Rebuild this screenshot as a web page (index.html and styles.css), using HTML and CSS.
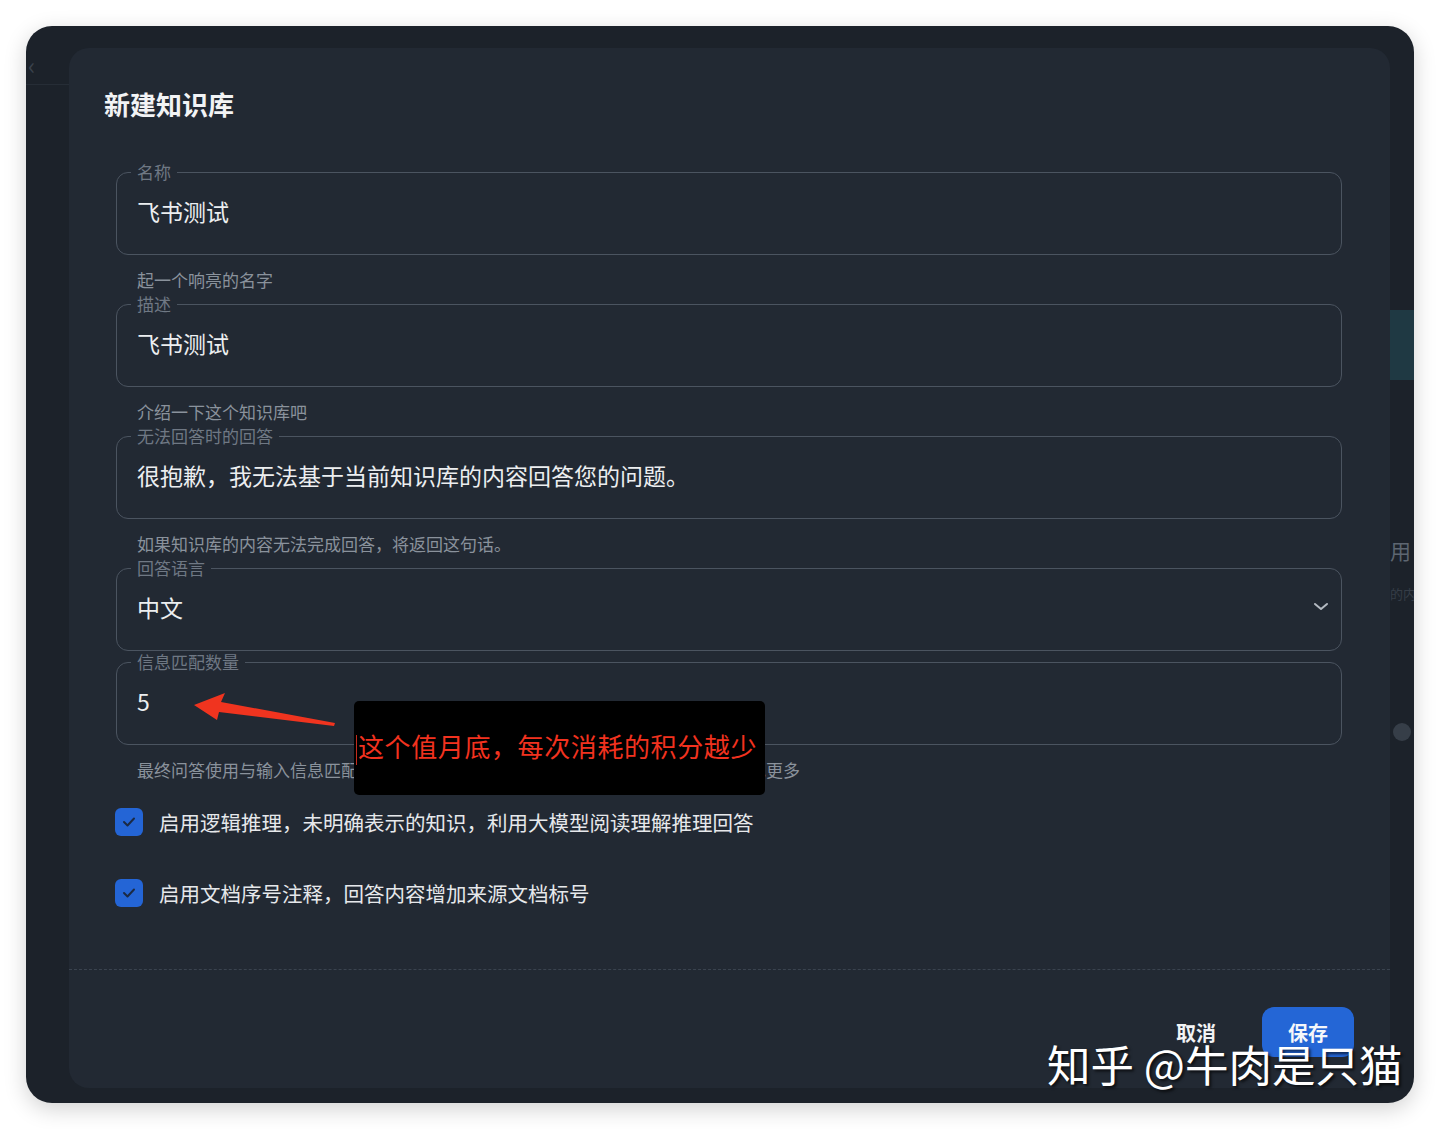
FILE: index.html
```html
<!DOCTYPE html>
<html lang="zh-CN">
<head>
  <meta charset="UTF-8">
  <meta name="viewport" content="width=device-width, initial-scale=1.0">
  <title>新建知识库</title>
  <link rel="stylesheet" href="styles.css">
</head>
<body>
  <div class="window">
    <div class="side side-left">
      <span class="back">&lsaquo;</span>
      <div class="side-line"></div>
    </div>

    <div class="dialog">
      <h2>新建知识库</h2>

      <div class="form">
        <fieldset class="field">
          <legend>名称</legend>
          <div class="value">飞书测试</div>
        </fieldset>
        <div class="help">起一个响亮的名字</div>

        <fieldset class="field">
          <legend>描述</legend>
          <div class="value">飞书测试</div>
        </fieldset>
        <div class="help">介绍一下这个知识库吧</div>

        <fieldset class="field">
          <legend>无法回答时的回答</legend>
          <div class="value">很抱歉，我无法基于当前知识库的内容回答您的问题。</div>
        </fieldset>
        <div class="help">如果知识库的内容无法完成回答，将返回这句话。</div>

        <fieldset class="field">
          <legend>回答语言</legend>
          <div class="value select">
            <span>中文</span>
            <svg class="chevron" width="16" height="10" viewBox="0 0 16 10">
              <path d="M2 2 L8 7 L14 2" fill="none" stroke="#b4bac2" stroke-width="2" stroke-linecap="round" stroke-linejoin="round"/>
            </svg>
          </div>
        </fieldset>

        <fieldset class="field">
          <legend>信息匹配数量</legend>
          <div class="value">5</div>
        </fieldset>
        <div class="help">最终问答使用与输入信息匹配度最高的几条知识，数值越大，参考越多，消耗积分也更多</div>

        <label class="check">
          <span class="box">
            <svg width="14" height="12" viewBox="0 0 14 12"><path d="M2 6 L5.5 9.5 L12 2.5" fill="none" stroke="#1b2a44" stroke-width="2" stroke-linecap="round" stroke-linejoin="round"/></svg>
          </span>
          启用逻辑推理，未明确表示的知识，利用大模型阅读理解推理回答
        </label>
        <label class="check">
          <span class="box">
            <svg width="14" height="12" viewBox="0 0 14 12"><path d="M2 6 L5.5 9.5 L12 2.5" fill="none" stroke="#1b2a44" stroke-width="2" stroke-linecap="round" stroke-linejoin="round"/></svg>
          </span>
          启用文档序号注释，回答内容增加来源文档标号
        </label>
      </div>

      <div class="divider"></div>

      <div class="footer">
        <button class="btn-cancel">取消</button>
        <button class="btn-save">保存</button>
      </div>
    </div>

    <div class="side side-right">
      <div class="teal"></div>
      <div class="ghost-title">用</div>
      <div class="ghost-sub">的内</div>
      <div class="ghost-dot"></div>
    </div>
  </div>

  <!-- annotation laid over the screenshot -->
  <svg class="arrow" width="160" height="40" viewBox="0 0 160 40">
    <polygon points="1,13 32,1 28,10 142,31 141,34 26,20 24,28" fill="#f0341f"/>
  </svg>
  <div class="note"><span class="caret"></span>这个值月底，每次消耗的积分越少</div>

  <div class="watermark">知乎 @牛肉是只猫</div>
</body>
</html>
```

FILE: styles.css
```css
body {
  margin: 0;
  padding: 26px;
  background: #ffffff;
  font-family: "Noto Sans CJK SC", "Noto Sans", sans-serif;
  color: #e6e8eb;
}
.window {
  width: 1388px;
  height: 1077px;
  background: #1c222a;
  border-radius: 26px;
  box-shadow: 0 6px 22px rgba(0,0,0,0.18);
  display: flex;
  overflow: hidden;
}
.side {
  flex: none;
}
.side-left {
  width: 43px;
  padding-top: 24px;
}
.back {
  display: block;
  margin-left: 2px;
  font-size: 24px;
  line-height: 30px;
  color: #3b434d;
}
.side-line {
  height: 1px;
  background: #262d36;
  margin-top: 4px;
}
.side-right {
  width: 24px;
  padding-top: 284px;
}
.teal {
  height: 70px;
  background: #1f3943;
}
.ghost-title {
  margin-top: 158px;
  font-size: 21px;
  line-height: 24px;
  color: #5d6671;
  white-space: nowrap;
}
.ghost-sub {
  margin-top: 22px;
  font-size: 13px;
  color: #353d47;
  white-space: nowrap;
}
.ghost-dot {
  margin-top: 120px;
  margin-left: 3px;
  width: 18px;
  height: 18px;
  border-radius: 50%;
  background: #363e48;
}
.dialog {
  flex: none;
  width: 1321px;
  height: 1040px;
  margin-top: 22px;
  background: #222933;
  border-radius: 20px;
  position: relative;
}
h2 {
  margin: 0;
  padding: 40px 0 0 35px;
  font-size: 26px;
  line-height: 32px;
  font-weight: 700;
  color: #f2f3f5;
}
.form {
  margin: 41px 48px 0 47px;
}
.field {
  margin: 0;
  padding: 0 0 0 14px;
  border: 1px solid #4b5460;
  border-radius: 12px;
  min-width: 0;
}
.field legend {
  padding: 0 6px;
  font-size: 17px;
  line-height: 22px;
  color: #6f7884;
}
.value {
  margin-top: 13px;
  margin-bottom: 28px;
  padding-left: 6px;
  font-size: 23px;
  line-height: 30px;
  color: #eceef0;
}
.select {
  display: flex;
  align-items: center;
  justify-content: space-between;
  padding-right: 12px;
}
.chevron {
  display: block;
}
.help {
  margin: 14px 0 2px 21px;
  font-size: 17px;
  line-height: 22px;
  color: #8a929c;
  white-space: nowrap;
}
.check {
  display: flex;
  align-items: center;
  gap: 16px;
  height: 36px;
  margin-left: -1px;
  font-size: 20.5px;
  color: #e6e8eb;
}
.check:first-of-type {
  margin-top: 23px;
}
.check + .check {
  margin-top: 35px;
}
.box {
  width: 28px;
  height: 28px;
  border-radius: 6px;
  background: #2465d6;
  display: flex;
  align-items: center;
  justify-content: center;
}
.divider {
  margin-top: 58px;
  border-top: 1px dashed #3a434f;
}
.footer {
  display: flex;
  justify-content: flex-end;
  align-items: center;
  gap: 36px;
  padding: 37px 36px 0 0;
}
button {
  font-family: inherit;
  font-size: 20px;
  font-weight: 700;
  border: none;
  cursor: pointer;
}
.btn-cancel {
  background: none;
  color: #f2f3f5;
  padding: 0 10px;
}
.btn-save {
  width: 92px;
  height: 50px;
  border-radius: 12px;
  background: #2466d6;
  color: #f5f7fa;
}
.arrow {
  position: absolute;
  left: 193px;
  top: 692px;
}
.note {
  position: absolute;
  left: 354px;
  top: 701px;
  width: 411px;
  height: 94px;
  box-sizing: border-box;
  padding-left: 2px;
  background: #000;
  border-radius: 5px;
  color: #f2321f;
  font-size: 26px;
  line-height: 90px;
  letter-spacing: 0.6px;
  white-space: nowrap;
}
.caret {
  display: inline-block;
  width: 1px;
  height: 30px;
  margin-right: 1px;
  vertical-align: middle;
  background: #c42a1c;
}
.watermark {
  position: absolute;
  left: 1047px;
  top: 1034px;
  font-size: 43.5px;
  line-height: 60px;
  color: #ffffff;
  text-shadow: 2px 2px 3px rgba(0,0,0,0.7);
  white-space: nowrap;
}
```
